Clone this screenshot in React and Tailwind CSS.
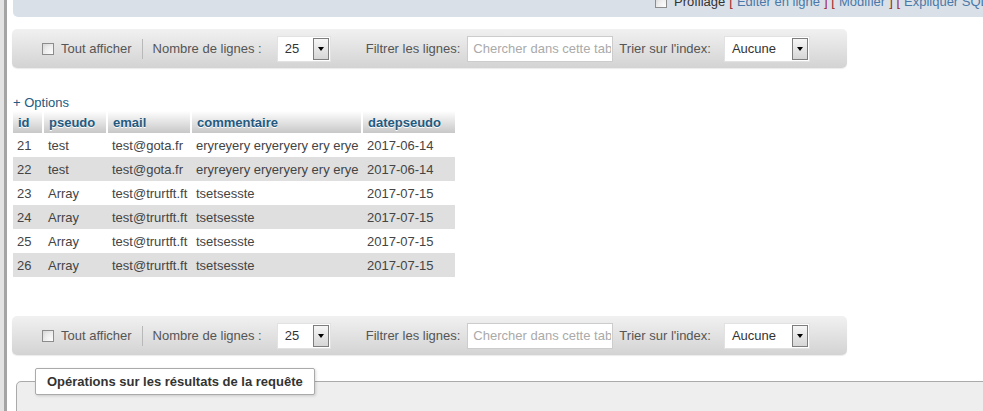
import React from "react";

function Check() {
  return (
    <div className="w-[12px] h-[12px] shrink-0 border border-[#8c8c8c] bg-gradient-to-br from-[#d8d8d8] to-white p-[2px]">
      <div className="w-full h-full bg-gradient-to-br from-[#e4e4e4] to-[#fafafa]" />
    </div>
  );
}

function Select({ width, value }) {
  return (
    <div className={`flex h-[26px] ${width} shrink-0 bg-white border border-[#e2e2e2]`}>
      <div className="flex-1 flex items-center pl-[7px] text-[#333]">{value}</div>
      <div className="w-[16px] my-[1px] mr-[1px] border border-[#7d7d7d] bg-gradient-to-b from-[#f6f6f6] to-[#d6d6d6] flex items-center justify-center">
        <div className="w-0 h-0 border-l-[3.5px] border-r-[3.5px] border-t-[4px] border-l-transparent border-r-transparent border-t-black" />
      </div>
    </div>
  );
}

function Toolbar({ className = "" }) {
  return (
    <div className={`flex shrink-0 items-center h-[39px] w-[835px] rounded-[5px] bg-gradient-to-b from-[#f1f1f1] to-[#d3d3d3] shadow-[0_1px_1px_rgba(0,0,0,0.08)] pl-[30px] text-[13px] text-[#555] ${className}`}>
      <Check />
      <span className="ml-[7px]">Tout afficher</span>
      <div className="ml-[10px] w-px h-[20px] bg-[#b8b8b8]" />
      <span className="ml-[10px]">Nombre de lignes :</span>
      <div className="ml-[15px]">
        <Select width="w-[54px]" value="25" />
      </div>
      <span className="ml-[35px]">Filtrer les lignes:</span>
      <input
        className="ml-[7px] h-[26px] w-[146px] border border-[#cccccc] bg-white pl-[5px] pr-[1px] text-[13px] text-[#333] placeholder:text-[#aaaaaa] outline-none"
        placeholder="Chercher dans cette table"
        readOnly
      />
      <span className="ml-[6px]">Trier sur l'index:</span>
      <div className="ml-[13px]">
        <Select width="w-[86px]" value="Aucune" />
      </div>
    </div>
  );
}

const rows = [
  ["21", "test", "test@gota.fr", "eryreyery eryeryery ery erye", "2017-06-14"],
  ["22", "test", "test@gota.fr", "eryreyery eryeryery ery erye", "2017-06-14"],
  ["23", "Array", "test@trurtft.ft", "tsetsesste", "2017-07-15"],
  ["24", "Array", "test@trurtft.ft", "tsetsesste", "2017-07-15"],
  ["25", "Array", "test@trurtft.ft", "tsetsesste", "2017-07-15"],
  ["26", "Array", "test@trurtft.ft", "tsetsesste", "2017-07-15"],
];

const heads = ["id", "pseudo", "email", "commentaire", "datepseudo"];
const widths = ["w-[30px]", "w-[64px]", "w-[84px]", "w-[171px]", "w-[93px]"];

export default function App() {
  return (
    <div className="w-[983px] h-[411px] overflow-hidden bg-white flex font-['Liberation_Sans',Arial,sans-serif] text-[13px] leading-[15px]">
      <div className="w-[4px] shrink-0 bg-[#e3e3e3]" />
      <div className="w-[3px] shrink-0 bg-[#a4a4a4]" />
      <div className="flex-1 pl-[5px] flex flex-col min-w-0">
        {/* top bar */}
        <div className="ml-[1px] h-[17px] shrink-0 bg-[#d9e0e7] rounded-bl-[5px] overflow-hidden whitespace-nowrap pl-[642px]">
          <div className="flex items-center -mt-[6px] h-[15px]">
            <Check />
            <span className="ml-[7px] text-[#333]">Profilage</span>
            <span className="ml-[4px] text-[#a02828]">[</span>
            <span className="ml-[4px] text-[#4a78a8]">Editer en ligne</span>
            <span className="ml-[4px] text-[#a02828]">] [</span>
            <span className="ml-[4px] text-[#4a78a8]">Modifier</span>
            <span className="ml-[4px] text-[#a02828]">] [</span>
            <span className="ml-[4px] text-[#4a78a8]">Expliquer SQL</span>
            <span className="ml-[4px] text-[#a02828]">]</span>
          </div>
        </div>

        <Toolbar className="mt-[12px]" />

        <div className="mt-[27px] ml-[1px] h-[16px] shrink-0 leading-[16px] text-[#235a81]">+ Options</div>

        <table className="ml-[1px] shrink-0 border-collapse table-fixed w-[442px]">
          <thead>
            <tr>
              {heads.map((h, i) => (
                <th
                  key={h}
                  className={`${widths[i]} h-[22px] p-0 pl-[5px] text-left align-middle font-bold text-[#235a81] bg-gradient-to-b from-white to-[#c8c8c8] [text-shadow:0_1px_0_#fff] ${i < 4 ? "border-r-2 border-white" : ""}`}
                >
                  {h}
                </th>
              ))}
            </tr>
          </thead>
          <tbody>
            {rows.map((r, ri) => (
              <tr key={r[0]} className={ri % 2 === 1 ? "bg-[#dfdfdf]" : "bg-white"}>
                {r.map((c, ci) => (
                  <td
                    key={ci}
                    className={`h-[24px] p-0 ${ci === 0 ? "pl-[4px]" : "pl-[5px]"} align-middle whitespace-nowrap text-[#444] overflow-visible`}
                  >
                    {c}
                  </td>
                ))}
              </tr>
            ))}
          </tbody>
        </table>

        <Toolbar className="mt-[39px]" />

        <fieldset className="mt-[13px] ml-[4px] -mr-[20px] border border-[#aaaaaa] rounded-tl-[5px] bg-[#eeeeee] pl-[18px] min-h-[60px] shrink-0">
          <legend className="h-[27px] px-[11px] bg-white border border-[#aaaaaa] rounded-[2px] shadow-[1px_1px_3px_rgba(0,0,0,0.15)] font-bold text-[#333] leading-[25px]">
            Opérations sur les résultats de la requête
          </legend>
        </fieldset>
      </div>
    </div>
  );
}
